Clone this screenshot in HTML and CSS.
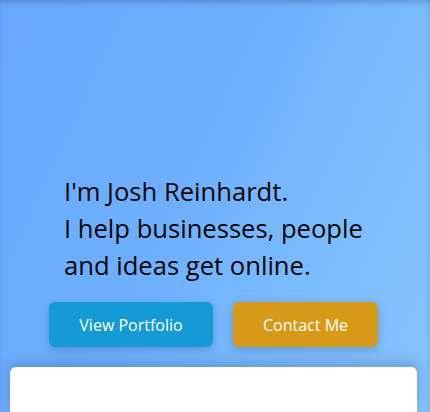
FILE: index.html
```html
<!DOCTYPE html>
<html lang="en">
<head>
<meta charset="utf-8">
<title>Josh Reinhardt</title>
<link rel="stylesheet" href="styles.css">
</head>
<body>
<div class="page">
  <section class="hero">
    <h1 class="intro">I'm Josh Reinhardt.<br>I help businesses, people<br>and ideas get online.</h1>
    <div class="actions">
      <a class="btn btn-blue" href="#portfolio">View Portfolio</a>
      <a class="btn btn-gold" href="#contact">Contact Me</a>
    </div>
  </section>
  <section class="card"></section>
</div>
</body>
</html>
```
FILE: styles.css
```css
html, body {
  margin: 0;
  padding: 0;
  height: 100%;
}
body {
  font-family: "Open Sans", "Noto Sans", sans-serif;
  background: linear-gradient(115deg, #69a8fd 0%, #6fb0fd 45%, #7bbcfd 70%, #86c4fc 100%);
  overflow: hidden;
}
.page {
  height: 100%;
  box-shadow: inset 0 4px 6px -2px rgba(40, 70, 120, 0.35);
  display: flex;
  flex-direction: column;
}
.hero {
  padding: 173px 0 0 49px;
  display: flex;
  flex-direction: column;
}
.intro {
  margin: 0;
  padding-left: 15px;
  font-size: 25.6px;
  line-height: 37px;
  font-weight: 400;
  color: #050505;
}
.actions {
  display: flex;
  gap: 20px;
  margin-top: 18px;
}
.btn {
  height: 45px;
  display: flex;
  align-items: center;
  justify-content: center;
  padding: 0 30px;
  border-radius: 6px;
  color: #fff;
  text-decoration: none;
  font-size: 16px;
  box-shadow: 0 3px 8px rgba(40, 70, 130, 0.3);
}
.btn-blue {
  background: #149ad5;
  width: 104px;
}
.btn-gold {
  background: #d69a18;
  width: 85px;
}
.card {
  margin: 20px 0 0 10px;
  width: 407px;
  flex: 1;
  background: #fff;
  border-radius: 6px 6px 0 0;
  box-shadow: 0 -4px 14px rgba(40, 70, 130, 0.3);
}
```
